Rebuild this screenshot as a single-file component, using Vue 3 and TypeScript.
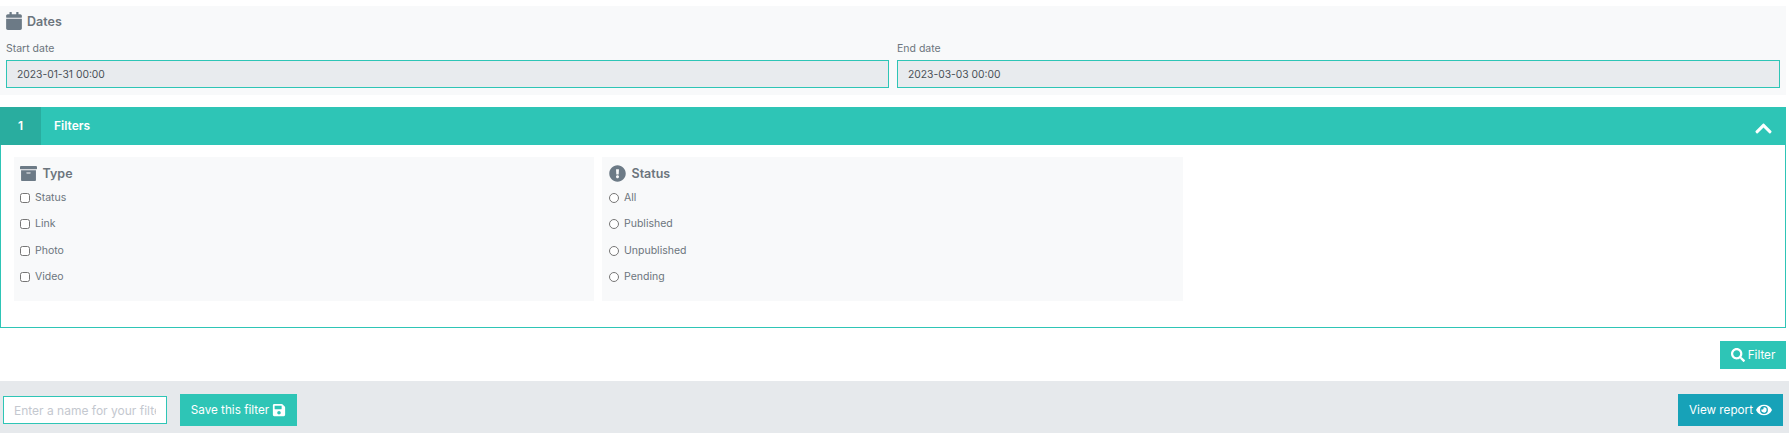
<script setup lang="ts">
const types: string[] = ['Status', 'Link', 'Photo', 'Video']
const statuses: string[] = ['All', 'Published', 'Unpublished', 'Pending']
</script>

<template>
  <div class="page">
    <section class="dates">
      <h4 class="heading dates-heading">
        <svg class="ico-cal" viewBox="0 0 448 512"><path d="M12 192h424c6.600 0 12 5.400 12 12v260c0 26.500-21.500 48-48 48H48c-26.500 0-48-21.500-48-48V204c0-6.600 5.400-12 12-12zm436-44v-36c0-26.500-21.500-48-48-48h-48V12c0-6.600-5.400-12-12-12h-40c-6.600 0-12 5.400-12 12v52H160V12c0-6.600-5.400-12-12-12h-40c-6.600 0-12 5.400-12 12v52H48C21.500 64 0 85.500 0 112v36c0 6.600 5.400 12 12 12h424c6.600 0 12-5.400 12-12z" /></svg>
        Dates
      </h4>
      <div class="date-row">
        <label class="date-field">
          <span class="date-label">Start date</span>
          <input class="date-input" type="text" value="2023-01-31 00:00" readonly />
        </label>
        <label class="date-field">
          <span class="date-label">End date</span>
          <input class="date-input" type="text" value="2023-03-03 00:00" readonly />
        </label>
      </div>
    </section>

    <section class="accordion">
      <header class="acc-head">
        <span class="acc-num">1</span>
        <span class="acc-title">Filters</span>
        <svg class="ico-chev" viewBox="0 0 448 512"><path d="M240.971 130.524l194.343 194.343c9.373 9.373 9.373 24.569 0 33.941l-22.667 22.667c-9.357 9.357-24.522 9.375-33.901.04L224 227.495 69.255 381.516c-9.379 9.335-24.544 9.317-33.901-.04l-22.667-22.667c-9.373-9.373-9.373-24.569 0-33.941L207.030 130.525c9.372-9.373 24.568-9.373 33.941-.001z" /></svg>
      </header>
      <div class="acc-body">
        <div class="card">
          <h4 class="heading card-heading">
            <svg class="ico-card" viewBox="0 0 512 512"><path d="M32 448c0 17.700 14.300 32 32 32h384c17.700 0 32-14.300 32-32V160H32v288zm160-212c0-6.600 5.400-12 12-12h104c6.600 0 12 5.400 12 12v8c0 6.600-5.400 12-12 12H204c-6.600 0-12-5.400-12-12v-8zM480 32H32C14.300 32 0 46.300 0 64v48c0 8.800 7.200 16 16 16h480c8.800 0 16-7.200 16-16V64c0-17.700-14.300-32-32-32z" /></svg>
            Type
          </h4>
          <label v-for="t in types" :key="t" class="opt">
            <input type="checkbox" class="opt-box" />
            <span class="opt-text">{{ t }}</span>
          </label>
        </div>
        <div class="card">
          <h4 class="heading card-heading">
            <svg class="ico-card" viewBox="0 0 512 512"><path d="M504 256c0 136.997-111.043 248-248 248S8 392.997 8 256C8 119.083 119.043 8 256 8s248 111.083 248 248zm-248 50c-25.405 0-46 20.595-46 46s20.595 46 46 46 46-20.595 46-46-20.595-46-46-46zm-43.673-165.346l7.418 136c.347 6.364 5.609 11.346 11.982 11.346h48.546c6.373 0 11.635-4.982 11.982-11.346l7.418-136c.375-6.874-5.098-12.654-11.982-12.654h-63.383c-6.884 0-12.356 5.780-11.981 12.654z" /></svg>
            Status
          </h4>
          <label v-for="s in statuses" :key="s" class="opt">
            <input type="radio" name="status" class="opt-box" />
            <span class="opt-text">{{ s }}</span>
          </label>
        </div>
      </div>
    </section>

    <div class="filter-row">
      <button class="btn btn-teal filter-btn" type="button">
        <svg class="ico-btn" viewBox="0 0 512 512"><path d="M505 442.700L405.300 343c-4.500-4.500-10.600-7-17-7H372c27.600-35.300 44-79.700 44-128C416 93.100 322.900 0 208 0S0 93.100 0 208s93.100 208 208 208c48.300 0 92.700-16.400 128-44v16.300c0 6.400 2.500 12.500 7 17l99.700 99.700c9.400 9.400 24.600 9.400 33.900 0l28.300-28.300c9.400-9.400 9.400-24.600.1-34zM208 336c-70.700 0-128-57.200-128-128 0-70.700 57.200-128 128-128 70.700 0 128 57.200 128 128 0 70.700-57.200 128-128 128z" /></svg>
        Filter
      </button>
    </div>

    <footer class="footer">
      <input class="name-input" type="text" placeholder="Enter a name for your filter" />
      <button class="btn btn-teal save-btn" type="button">
        Save this filter
        <svg class="ico-btn" viewBox="0 0 448 512"><path d="M433.941 129.941l-83.882-83.882A48 48 0 0 0 316.118 32H48C21.490 32 0 53.490 0 80v352c0 26.510 21.490 48 48 48h352c26.510 0 48-21.490 48-48V163.882a48 48 0 0 0-14.059-33.941zM224 416c-35.346 0-64-28.654-64-64 0-35.346 28.654-64 64-64s64 28.654 64 64c0 35.346-28.654 64-64 64zm96-304.520V212c0 6.627-5.373 12-12 12H76c-6.627 0-12-5.373-12-12V108c0-6.627 5.373-12 12-12h228.520c3.183 0 6.235 1.264 8.485 3.515l3.480 3.480A11.996 11.996 0 0 1 320 111.480z" /></svg>
      </button>
      <button class="btn btn-blue view-btn" type="button">
        View report
        <svg class="ico-eye" viewBox="0 0 576 512"><path d="M572.520 241.400C518.290 135.590 410.930 64 288 64S57.680 135.640 3.480 241.410a32.350 32.350 0 0 0 0 29.190C57.710 376.410 165.070 448 288 448s230.320-71.640 284.520-177.410a32.350 32.350 0 0 0 0-29.190zM288 400a144 144 0 1 1 144-144 143.930 143.930 0 0 1-144 144zm0-240a95.310 95.310 0 0 0-25.310 3.790 47.850 47.850 0 0 1-66.900 66.900A95.780 95.780 0 1 0 288 160z" /></svg>
      </button>
    </footer>
  </div>
</template>

<style scoped>
.page {
  width: 1789px;
  height: 433px;
  overflow: hidden;
  box-sizing: border-box;
  padding-top: 6px;
  font-family: Inter, "Liberation Sans", sans-serif;
  color: #6c757d;
  background: #fff;
}
.heading {
  margin: 0;
  display: flex;
  align-items: center;
  font-weight: 600;
  color: #6c757d;
}
.dates {
  width: 1786px;
  height: 89px;
  box-sizing: border-box;
  background: #f8f9fa;
  padding: 5px 6px 0;
}
.dates-heading {
  height: 20px;
  font-size: 12.5px;
  gap: 5px;
}
.ico-cal {
  width: 16px;
  height: 18px;
  fill: #6c7a86;
}
.date-row {
  display: flex;
  gap: 8px;
  margin-top: 10px;
}
.date-field {
  display: block;
  width: 883px;
}
.date-label {
  display: block;
  height: 19px;
  line-height: 16px;
  font-size: 10.5px;
  color: #6c757d;
}
.date-input {
  display: block;
  width: 100%;
  height: 28px;
  box-sizing: border-box;
  border: 1px solid #2ec5b6;
  border-radius: 0;
  background: #e8ebee;
  padding: 0 10px;
  font: 10.3px Inter, "Liberation Sans", sans-serif;
  color: #495057;
  outline: none;
}
.accordion {
  width: 1786px;
  margin-top: 12px;
}
.acc-head {
  height: 38px;
  background: #2ec5b6;
  display: flex;
  align-items: center;
  color: #fff;
}
.acc-num {
  width: 41px;
  height: 100%;
  box-sizing: border-box;
  padding-bottom: 2px;
  background: #29ad9f;
  display: flex;
  align-items: center;
  justify-content: center;
  font-size: 12px;
  font-weight: 600;
}
.acc-title {
  margin-left: 13px;
  margin-bottom: 2px;
  font-size: 12px;
  font-weight: 600;
}
.ico-chev {
  margin-left: auto;
  margin-right: 14px;
  width: 17px;
  height: 19px;
  fill: #fff;
  margin-top: 4px;
}
.acc-body {
  height: 183px;
  box-sizing: border-box;
  border: 1px solid #2ec5b6;
  border-top: 0;
  padding: 12px 13px 0;
  display: flex;
  gap: 8px;
}
.card {
  width: 580px;
  height: 144px;
  box-sizing: border-box;
  background: #f8f9fa;
  padding: 6px 6px 0;
}
.card + .card {
  width: 581px;
  padding-left: 7px;
}
.card-heading {
  height: 21px;
  font-size: 12.5px;
  gap: 5.5px;
  margin-bottom: 7px;
}
.ico-card {
  width: 17px;
  height: 17px;
  fill: #6c7a86;
}
.opt {
  display: flex;
  align-items: flex-start;
  height: 26.4px;
  font-size: 10.5px;
  color: #6c757d;
}
.opt-box {
  width: 10px;
  height: 10px;
  margin: 2px 5px 0 0;
  flex: none;
}
.opt-text {
  line-height: 14px;
}
.filter-row {
  width: 1786px;
  display: flex;
  justify-content: flex-end;
  margin-top: 13px;
}
.btn {
  border: 0;
  border-radius: 0;
  color: #fff;
  font: 11.7px Inter, "Liberation Sans", sans-serif;
  display: inline-flex;
  align-items: center;
  justify-content: center;
  gap: 3px;
  padding: 0;
}
.btn-teal {
  background: #2ec5b6;
}
.btn-blue {
  background: #17a2b8;
}
.filter-btn {
  width: 66px;
  height: 28px;
}
.ico-btn {
  width: 14px;
  height: 14px;
  fill: #fff;
}
.ico-eye {
  width: 16px;
  height: 14px;
  fill: #fff;
}
.footer {
  margin-top: 12px;
  height: 52px;
  box-sizing: border-box;
  background: #e6e9ec;
  display: flex;
  align-items: center;
  padding: 6px 6px 0 3px;
}
.name-input {
  width: 164px;
  height: 28px;
  box-sizing: border-box;
  border: 1px solid #2ec5b6;
  border-radius: 0;
  background: #fff;
  padding: 0 10px;
  font: 12px Inter, "Liberation Sans", sans-serif;
  outline: none;
}
.name-input::placeholder {
  color: #c4c8cf;
  opacity: 1;
}
.save-btn {
  margin-left: 13px;
  width: 117px;
  height: 32px;
}
.view-btn {
  margin-left: auto;
  width: 105px;
  height: 32px;
}
</style>
